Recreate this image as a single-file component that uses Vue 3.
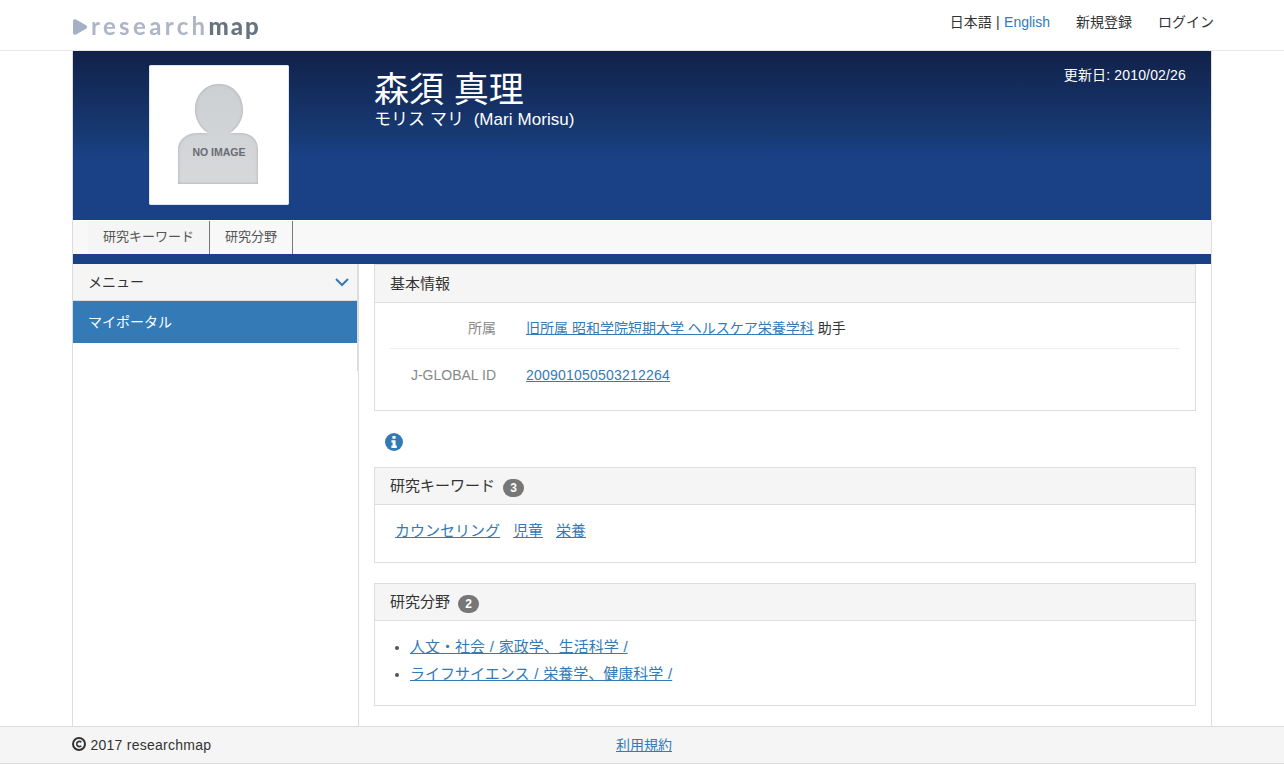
<script setup>
const keywords = ['カウンセリング', '児童', '栄養']
const fields = ['人文・社会 / 家政学、生活科学 /', 'ライフサイエンス / 栄養学、健康科学 /']
</script>

<template>
  <div class="page">
    <header class="top">
      <div class="top-inner">
        <div class="logo">
          <svg class="logo-mark" width="14" height="16" viewBox="0 0 14 16"><path d="M3 .5 13 6.2c1.4.8 1.4 2.8 0 3.6L3 15.5C1.5 16.3 0 15.4 0 13.7V2.3C0 .6 1.5-.3 3 .5Z" fill="#a5afc6"/></svg>
          <span class="logo-a">research</span><span class="logo-b">map</span>
        </div>
        <nav class="top-nav">
          <span class="lang">日本語 | <a class="plain">English</a></span>
          <span class="reg">新規登録</span>
          <span class="login">ログイン</span>
        </nav>
      </div>
    </header>

    <div class="wrap">
      <section class="banner">
        <div class="photo">
          <svg width="134" height="134" viewBox="0 0 134 134">
            <defs>
              <linearGradient id="pg" x1="0" y1="0" x2="0" y2="1">
                <stop offset="0" stop-color="#cdd0d3"/><stop offset="1" stop-color="#d6d8da"/>
              </linearGradient>
              <filter id="inset" x="-10%" y="-10%" width="120%" height="120%">
                <feGaussianBlur in="SourceAlpha" stdDeviation="1.4" result="b"/>
                <feComposite in="SourceAlpha" in2="b" operator="out" result="edge"/>
                <feFlood flood-color="#9a9ea3" flood-opacity=".9"/>
                <feComposite in2="edge" operator="in" result="shade"/>
                <feMerge><feMergeNode in="SourceGraphic"/><feMergeNode in="shade"/></feMerge>
              </filter>
            </defs>
            <path d="M28 116V82c0-11 9-17 20-17h10c-8-5-13-14-13-23 0-15 10-26 24-26s24 11 24 26c0 9-5 18-13 23h10c11 0 18 6 18 17v34Z" fill="url(#pg)" filter="url(#inset)" transform="translate(-2 0)"/>
            <text x="67" y="88" text-anchor="middle" class="noimg">NO IMAGE</text>
          </svg>
        </div>
        <div class="names">
          <h1>森須 真理</h1>
          <p>モリス マリ&nbsp; (Mari Morisu)</p>
        </div>
        <div class="updated">更新日: 2010/02/26</div>
      </section>

      <nav class="tabs">
        <a class="tab first">研究キーワード</a>
        <a class="tab">研究分野</a>
      </nav>
      <div class="band"></div>

      <div class="columns">
        <aside class="side">
          <div class="side-box">
            <div class="side-head">
              <span class="side-title">メニュー</span>
              <svg width="14" height="10" viewBox="0 0 14 10"><path d="M1 2l6 6 6-6" fill="none" stroke="#337ab7" stroke-width="2"/></svg>
            </div>
            <div class="side-item">マイポータル</div>
          </div>
        </aside>

        <main class="main">
          <section class="panel">
            <div class="panel-head">基本情報</div>
            <div class="panel-body basic">
              <div class="row line">
                <div class="label">所属</div>
                <div class="value"><a>旧所属 昭和学院短期大学 ヘルスケア栄養学科</a> 助手</div>
              </div>
              <div class="row">
                <div class="label">J-GLOBAL ID</div>
                <div class="value"><a class="digits">200901050503212264</a></div>
              </div>
            </div>
          </section>

          <div class="info">
            <svg width="18" height="18" viewBox="0 0 18 18">
              <circle cx="9" cy="9" r="9" fill="#337ab7"/>
              <rect x="7.4" y="3" width="3.2" height="2.8" rx=".4" fill="#fff"/>
              <path d="M6.4 7.2h4.2v5.4h1.2V15H6.4v-2.4h1.2V9.6H6.4Z" fill="#fff"/>
            </svg>
          </div>

          <section class="panel mb">
            <div class="panel-head short">研究キーワード <span class="badge">3</span></div>
            <div class="panel-body keys">
              <a v-for="k in keywords" :key="k">{{ k }}</a>
            </div>
          </section>

          <section class="panel">
            <div class="panel-head short">研究分野 <span class="badge">2</span></div>
            <div class="panel-body fields">
              <ul>
                <li v-for="f in fields" :key="f"><a>{{ f }}</a></li>
              </ul>
            </div>
          </section>
        </main>
      </div>
    </div>

    <footer class="foot">
      <div class="foot-inner">
        <div class="copy">
          <svg width="14" height="14" viewBox="0 0 14 14"><circle cx="7" cy="7" r="6" fill="none" stroke="#333" stroke-width="2"/><path d="M9.3 5.3A2.6 2.6 0 1 0 9.3 8.7" fill="none" stroke="#333" stroke-width="1.6"/></svg>
          <span>2017 researchmap</span>
        </div>
        <a class="terms">利用規約</a>
      </div>
    </footer>
  </div>
</template>

<style>
html, body { margin: 0; overflow: hidden; }
</style>

<style scoped>
.page {
  height: 764px;
  display: flex;
  flex-direction: column;
  font-family: "Liberation Sans", "Noto Sans CJK JP", sans-serif;
  font-size: 14px;
  color: #333;
  background: #fff;
  overflow: hidden;
}
a { color: #337ab7; text-decoration: underline; }
a.plain { text-decoration: none; }

.top { height: 50px; border-bottom: 1px solid #e7e7e7; flex: none; }
.top-inner { width: 1140px; margin: 0 auto; height: 50px; position: relative; display: flex; justify-content: space-between; }
.logo { display: flex; align-items: center; padding: 12px 0 0 1px; height: 28px; line-height: 28px; filter: blur(.3px); }
.logo-mark { margin-right: 4px; margin-top: 1px; }
.logo-a, .logo-b { font-family: "Lato", sans-serif; font-size: 24px; font-weight: 700; }
.logo-a { color: #adb5c7; letter-spacing: 3.35px; }
.logo-b { color: #687380; font-weight: 900; letter-spacing: 2px; }
.top-nav { display: flex; padding: 15px 0 0; line-height: 15px; font-size: 14px; margin-right: -2px; height: 15px; }
.lang { word-spacing: .5px; }
.reg { margin-left: 26px; }
.login { margin-left: 26px; }

.wrap {
  width: 1138px;
  margin: 0 auto;
  flex: 1;
  min-height: 0;
  display: flex;
  flex-direction: column;
  border-left: 1px solid #ddd;
  border-right: 1px solid #ddd;
}
.banner {
  height: 169px;
  flex: none;
  display: flex;
  color: #fff;
  background: linear-gradient(#112149 0, #173a74 50%, #1a4185 62%, #1a4185 100%);
  position: relative;
}
.photo {
  width: 134px;
  height: 134px;
  margin: 14px 0 0 76px;
  border: 3px solid #fff;
  outline: 1px solid #dfe7f3;
  outline-offset: -1px;
  border-radius: 2px;
  background: #fff;
  flex: none;
  box-sizing: content-box;
}
.photo svg { display: block; }
.noimg { font-family: "Liberation Sans", sans-serif; font-size: 10.5px; font-weight: 700; fill: #686d74; }
.names { margin: 18px 0 0 85px; }
.names h1 { margin: 0; font-size: 35px; font-weight: 400; line-height: 42px; }
.names p { margin: 0; font-size: 17px; line-height: 17px; letter-spacing: .06px; }
.updated { position: absolute; top: 16px; right: 25px; line-height: 16px; letter-spacing: .16px; }

.tabs {
  height: 33px;
  flex: none;
  display: flex;
  background: #f8f8f8;
  padding-left: 15px;
  border-top: 1px solid #fff;
}
.tab {
  padding: 0 15px;
  line-height: 31px;
  font-size: 13px;
  color: #555;
  text-decoration: none;
  border-right: 1px solid #777;
}
.tab.first { background: #f5f5f5; }
.band { height: 10px; flex: none; background: #1a4185; }

.columns { flex: 1; min-height: 0; display: flex; }
.side { width: 285px; flex: none; border-right: 1px solid #ddd; }
.side-box { width: 285px; height: 107px; border-right: 1px solid #ddd; box-sizing: border-box; }
.side-head {
  height: 36px;
  background: #f5f5f5;
  border-bottom: 1px solid #ddd;
  display: flex;
  align-items: center;
  justify-content: space-between;
  padding: 0 8px 0 15px;
}
.side-title { margin-top: -2px; }
.side-item {
  height: 42px;
  line-height: 42px;
  padding-left: 15px;
  background: #337ab7;
  color: #fff;
}

.main { flex: 1; min-width: 0; padding: 0 15px; }
.panel { border: 1px solid #ddd; background: #fff; }
.panel.mb { margin-bottom: 20px; }
.panel-head {
  background: #f5f5f5;
  border-bottom: 1px solid #ddd;
  height: 37px;
  line-height: 37px;
  padding-left: 15px;
  font-size: 15px;
}
.panel-head.short { height: 36px; line-height: 36px; }
.badge {
  display: inline-block;
  background: #777;
  color: #fff;
  border-radius: 10px;
  font-size: 12px;
  font-weight: 700;
  line-height: 12px;
  padding: 3px 7px;
  margin-left: 4px;
  vertical-align: -1px;
}
.panel-body.basic { padding: 0 15px 15px; }
.row { display: flex; line-height: 20px; padding-top: 16px; padding-bottom: 10px; }
.row.line { border-bottom: 1px solid #eee; padding-top: 15px; }
.label { width: 106px; text-align: right; color: #888; flex: none; }
.value { margin-left: 30px; }
.digits { letter-spacing: .22px; }
.info { height: 56px; padding: 22px 0 0 11px; box-sizing: border-box; }
.info svg { display: block; }
.keys { height: 57px; padding: 16px 0 0 20px; box-sizing: border-box; font-size: 15px; line-height: 20px; display: flex; gap: 13px; }
.fields { height: 84px; padding: 12px 15px 0; box-sizing: border-box; font-size: 15px; }
.fields ul { margin: 0; padding-left: 20px; }
.fields li { line-height: 27px; word-spacing: .6px; }
.fields li::marker { font-size: 14px; color: #555; }

.foot {
  height: 36px;
  flex: none;
  background: #f5f5f5;
  border-top: 1px solid #ddd;
  border-bottom: 1px solid #ddd;
}
.foot-inner { width: 1140px; margin: 0 auto; height: 36px; position: relative; display: flex; align-items: center; }
.copy { display: flex; align-items: center; gap: 4.5px; letter-spacing: .25px; }
.copy svg { margin-top: -2px; }
.terms { position: absolute; left: 544px; top: 10px; font-size: 14px; line-height: 16px; }
</style>
